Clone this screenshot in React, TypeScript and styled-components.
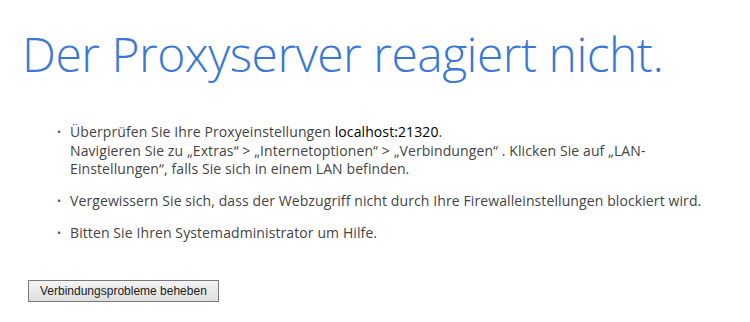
import styled, { createGlobalStyle } from 'styled-components'

const GlobalStyle = createGlobalStyle`
  html, body {
    margin: 0;
    padding: 0;
    background: #fff;
  }
`

const Page = styled.main`
  padding: 22px 0 0 22px;
  font-family: 'Open Sans', 'Noto Sans', sans-serif;
`

const Title = styled.h1`
  margin: 0;
  font-weight: 300;
  font-size: 48px;
  line-height: 64px;
  color: #3a78d8;
  letter-spacing: -0.5px;
`

const Tips = styled.ul`
  margin: 37px 0 0;
  padding: 0 0 0 48px;
  list-style: none;
`

const Tip = styled.li`
  position: relative;
  margin-bottom: 13.5px;
  font-size: 14px;
  line-height: 18.5px;
  letter-spacing: 0.1px;
  color: #444;
  white-space: nowrap;

  &::before {
    content: '•';
    position: absolute;
    left: -13px;
    color: #555;
    font-size: 11px;
  }
`

const Host = styled.span`
  color: #000;
`

const FixButton = styled.button`
  margin: 24px 0 0 6px;
  height: 22px;
  padding: 0 11px;
  border: 1px solid #7a7a7a;
  border-radius: 0;
  background: linear-gradient(#f4f4f4, #dedede);
  font-family: 'Liberation Sans', Arial, sans-serif;
  font-size: 12px;
  color: #222;
`

export default function App() {
  return (
    <>
      <GlobalStyle />
      <Page>
        <Title>Der Proxyserver reagiert nicht.</Title>
        <Tips>
          <Tip>
            Überprüfen Sie Ihre Proxyeinstellungen <Host>localhost:21320</Host>.
            <br />
            Navigieren Sie zu „Extras“ &gt; „Internetoptionen“ &gt; „Verbindungen“ . Klicken Sie auf „LAN-
            <br />
            Einstellungen“, falls Sie sich in einem LAN befinden.
          </Tip>
          <Tip>Vergewissern Sie sich, dass der Webzugriff nicht durch Ihre Firewalleinstellungen blockiert wird.</Tip>
          <Tip>Bitten Sie Ihren Systemadministrator um Hilfe.</Tip>
        </Tips>
        <FixButton>Verbindungsprobleme beheben</FixButton>
      </Page>
    </>
  )
}
